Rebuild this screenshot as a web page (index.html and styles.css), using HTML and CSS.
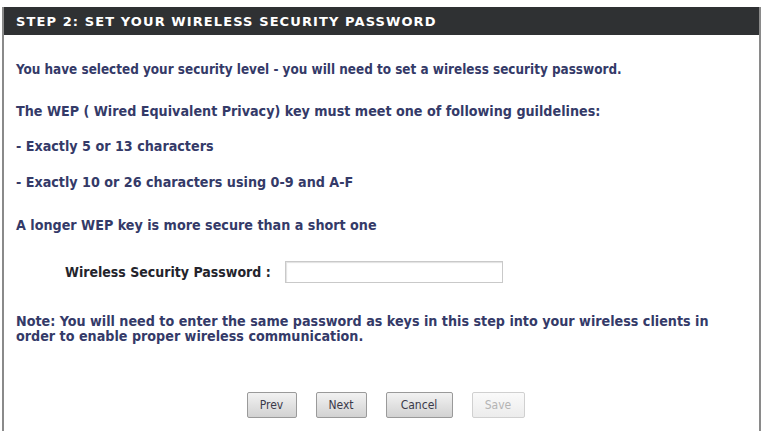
FILE: index.html
```html
<!DOCTYPE html>
<html>
<head>
<meta charset="utf-8">
<link rel="stylesheet" href="styles.css">
</head>
<body>
<div class="box">
  <div class="head">STEP 2: SET YOUR WIRELESS SECURITY PASSWORD</div>
  <div class="content">
    <p class="l1">You have selected your security level - you will need to set a wireless security password.</p>
    <p class="l2">The WEP ( Wired Equivalent Privacy) key must meet one of following guildelines:</p>
    <p class="l3">- Exactly 5 or 13 characters</p>
    <p class="l4">- Exactly 10 or 26 characters using 0-9 and A-F</p>
    <p class="l5">A longer WEP key is more secure than a short one</p>
    <div class="field">
      <span class="label">Wireless Security Password :</span>
      <span class="input"></span>
    </div>
    <p class="note">Note: You will need to enter the same password as keys in this step into your wireless clients in order to enable proper wireless communication.</p>
    <div class="buttons">
      <span class="btn b-prev">Prev</span>
      <span class="btn b-next">Next</span>
      <span class="btn b-cancel">Cancel</span>
      <span class="btn b-save disabled">Save</span>
    </div>
  </div>
</div>
</body>
</html>
```
FILE: styles.css
```css
html, body { margin: 0; padding: 0; background: #fff; }
body { width: 762px; height: 431px; overflow: hidden; font-family: "DejaVu Sans Condensed", "DejaVu Sans", sans-serif; }
.box {
  margin: 7px 1px 0 2px;
  border-left: 2px solid #8a8a8a;
  border-right: 2px solid #8a8a8a;
  height: 424px;
  box-sizing: border-box;
}
.head {
  background: #2f3133;
  color: #fff;
  height: 28px;
  line-height: 29px;
  padding-left: 12px;
  font-family: "DejaVu Sans", sans-serif;
  font-weight: bold;
  font-size: 13px;
  letter-spacing: 1.1px;
}
.content { padding-left: 12px; color: #343a68; font-weight: bold; font-size: 13.4px; }
.content p { margin: 0; line-height: 16px; }
.l1 { padding-top: 27px; }
.l2 { padding-top: 25px; font-size: 14.2px; }
.l3 { padding-top: 19px; font-size: 14.2px; }
.l4 { padding-top: 20px; font-size: 14.2px; }
.l5 { padding-top: 27px; font-size: 14.2px; }
.field { display: flex; align-items: center; margin-top: 28px; padding-left: 49px; height: 22px; }
.label { color: #24242c; width: 220px; font-size: 14px; }
.input {
  width: 216px; height: 20px;
  border: 1px solid #c9c9c9;
  box-shadow: inset 1px 1px 1px #e2e2e2;
  background: #fff;
}
.note { margin-top: 31px !important; line-height: 15px !important; width: 702px; font-size: 14.2px; }
.buttons { display: flex; justify-content: center; gap: 19px; margin-top: 48px; padding-right: 4px; font-weight: normal; }
.btn {
  height: 26px; line-height: 25px;
  border: 1px solid #9a9a9a;
  border-radius: 2px;
  background: linear-gradient(#f2f2f2, #d2d2d2);
  color: #3a3a4a; font-size: 12px; text-align: center;
  box-sizing: border-box;
}
.b-prev { width: 50px; }
.b-next { width: 51px; }
.b-cancel { width: 67px; }
.b-save { width: 53px; }
.disabled { color: #b4b4b4; border-color: #d0d0d0; background: linear-gradient(#fafafa, #ececec); }
```
